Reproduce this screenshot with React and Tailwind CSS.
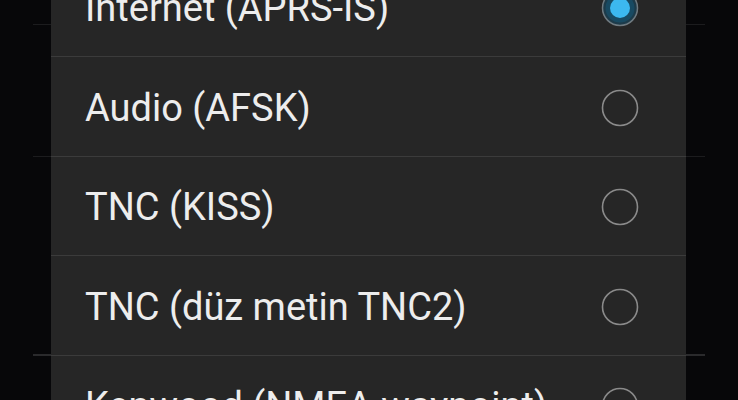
import React from 'react';

const options = [
  { label: 'Internet (APRS-IS)', selected: true },
  { label: 'Audio (AFSK)' },
  { label: 'TNC (KISS)' },
  { label: 'TNC (düz metin TNC2)' },
  { label: 'Kenwood (NMEA waypoint)' },
];

const Radio = ({ selected }) => (
  <svg width="38" height="38" viewBox="0 0 38 38" className="shrink-0">
    {selected ? (
      <>
        <circle cx="19" cy="19" r="17.5" fill="#1d3b4a" stroke="#6f7a80" strokeWidth="1.5" />
        <circle cx="19" cy="19" r="14.5" fill="#184a62" />
        <circle cx="19" cy="19" r="10" fill="#3cb8ef" />
      </>
    ) : (
      <circle cx="19" cy="19" r="17.5" fill="none" stroke="#8a8a8a" strokeWidth="1.6" />
    )}
  </svg>
);

export default function App() {
  return (
    <div className="relative h-[400px] w-[738px] overflow-hidden bg-[#070709] font-['Roboto',sans-serif]">
      {/* list behind the dialog */}
      <div className="flex flex-col px-[33px] pt-[24px]">
        <div className="h-px bg-[#1c1c1e]" />
        <div className="h-[131px]" />
        <div className="h-px bg-[#1c1c1e]" />
        <div className="h-[197px]" />
        <div className="h-[2px] bg-[#2a2a2c]" />
      </div>

      {/* dialog */}
      <div className="absolute left-[51px] top-[-42.5px] w-[635px] bg-[#262626]">
        {options.map((o) => (
          <div
            key={o.label}
            className="flex h-[99.5px] items-center justify-between border-b-[1.5px] border-[#3b3b3b] pl-[34px] pr-[47px] pt-[3px]"
          >
            <span className="text-[38px] leading-none text-[#ededed]">{o.label}</span>
            <Radio selected={o.selected} />
          </div>
        ))}
      </div>
    </div>
  );
}
